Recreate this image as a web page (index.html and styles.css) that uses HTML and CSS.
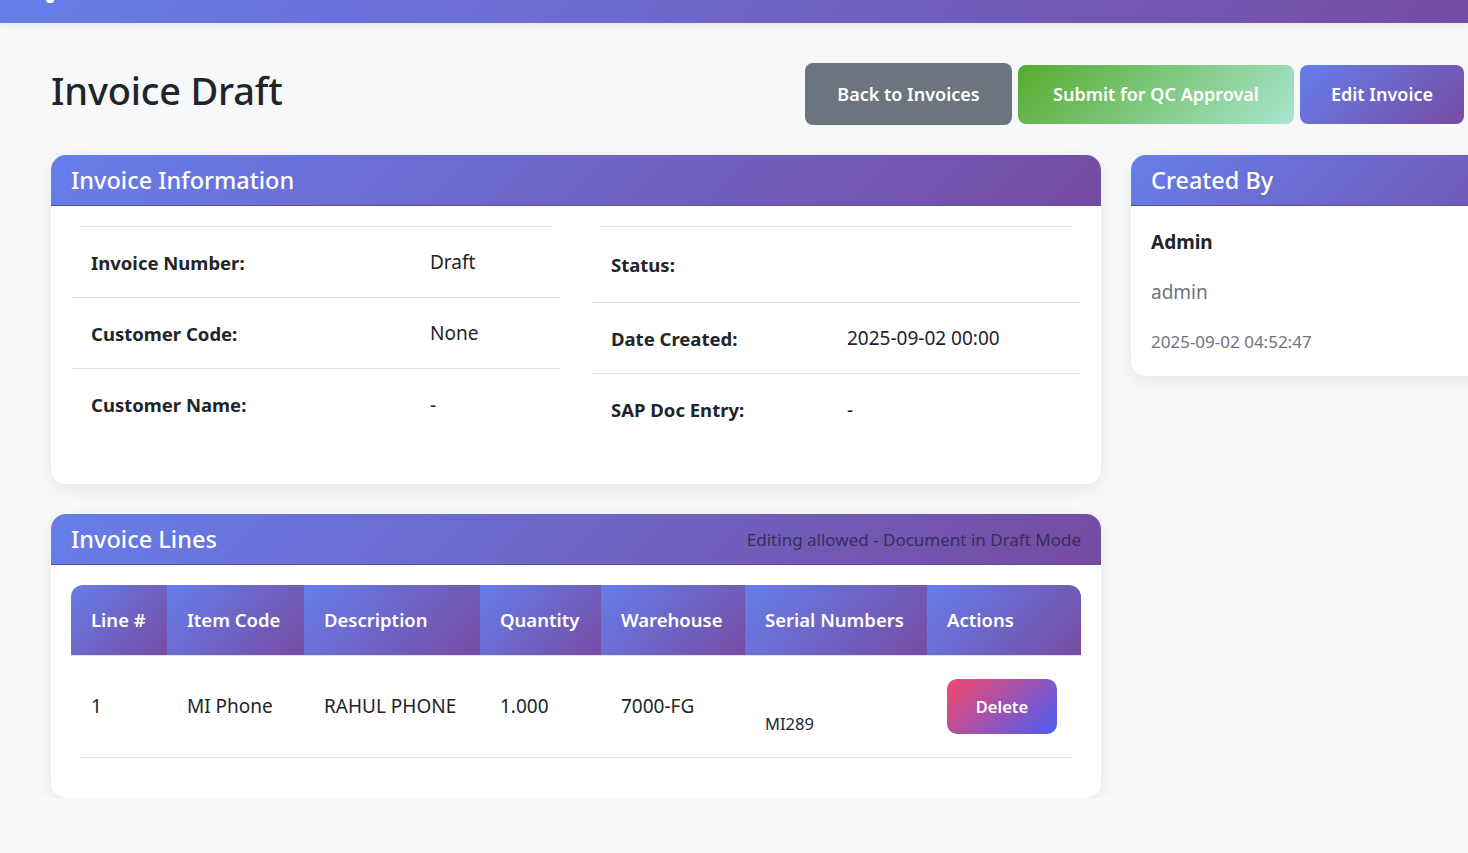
FILE: index.html
```html
<!DOCTYPE html>
<html lang="en">
<head>
<meta charset="utf-8">
<title>Invoice Draft</title>
<link rel="stylesheet" href="styles.css">
</head>
<body>
<div class="navbar"><span class="nav-dot"></span></div>
<main class="page">
  <div class="page-header">
    <h1 class="page-title">Invoice Draft</h1>
    <div class="actions">
      <button class="btn btn-back">Back to Invoices</button>
      <button class="btn btn-submit">Submit for QC Approval</button>
      <button class="btn btn-edit">Edit Invoice</button>
    </div>
  </div>
  <div class="layout">
    <div class="main-col">
      <section class="card">
        <div class="card-header"><h2 class="card-title">Invoice Information</h2></div>
        <div class="card-body info-body">
          <div class="info-list info-left">
            <div class="rule rule-inset"></div>
            <div class="info-row"><div class="info-label">Invoice Number:</div><div class="info-value">Draft</div></div>
            <div class="info-row"><div class="info-label">Customer Code:</div><div class="info-value">None</div></div>
            <div class="info-row last"><div class="info-label">Customer Name:</div><div class="info-value">-</div></div>
          </div>
          <div class="info-list info-right">
            <div class="rule rule-inset"></div>
            <div class="info-row tall"><div class="info-label">Status:</div><div class="info-value"></div></div>
            <div class="info-row"><div class="info-label">Date Created:</div><div class="info-value">2025-09-02 00:00</div></div>
            <div class="info-row last"><div class="info-label">SAP Doc Entry:</div><div class="info-value">-</div></div>
          </div>
        </div>
      </section>
      <section class="card">
        <div class="card-header header-split">
          <h2 class="card-title">Invoice Lines</h2>
          <span class="header-note">Editing allowed - Document in Draft Mode</span>
        </div>
        <div class="card-body lines-body">
          <table class="lines-table">
            <colgroup>
              <col class="c1"><col class="c2"><col class="c3"><col class="c4"><col class="c5"><col class="c6"><col class="c7">
            </colgroup>
            <thead>
              <tr>
                <th class="th-first">Line #</th>
                <th>Item Code</th>
                <th>Description</th>
                <th>Quantity</th>
                <th>Warehouse</th>
                <th>Serial Numbers</th>
                <th class="th-last">Actions</th>
              </tr>
            </thead>
            <tbody>
              <tr>
                <td>1</td>
                <td>MI Phone</td>
                <td>RAHUL PHONE</td>
                <td>1.000</td>
                <td>7000-FG</td>
                <td class="serials"><div class="serial">MI289</div></td>
                <td><button class="btn-delete">Delete</button></td>
              </tr>
            </tbody>
          </table>
          <div class="rule rule-inset"></div>
        </div>
      </section>
    </div>
    <aside class="side-col">
      <section class="card">
        <div class="card-header"><h2 class="card-title">Created By</h2></div>
        <div class="card-body creator-body">
          <div class="creator-name">Admin</div>
          <div class="creator-user">admin</div>
          <div class="creator-date">2025-09-02 04:52:47</div>
        </div>
      </section>
    </aside>
  </div>
</main>
</body>
</html>
```

FILE: styles.css
```css
* { box-sizing: border-box; }
html, body { margin: 0; padding: 0; }
body {
  background: #f7f8fa;
  font-family: "Noto Sans", "Open Sans", sans-serif;
  color: #212529;
  overflow-x: hidden;
  width: 1468px;
}
.navbar {
  height: 23px;
  background: linear-gradient(135deg, #667eea 0%, #764ba2 100%);
  box-shadow: 0 2px 8px rgba(0,0,0,0.08);
  padding-left: 46px;
}
.nav-dot {
  display: block;
  width: 8px;
  height: 3px;
  background: #fff;
  border-radius: 0 0 4px 4px;
}
.page {
  padding: 40px 0 0 51px;
}
.page-header {
  display: flex;
  align-items: center;
  justify-content: space-between;
  height: 62px;
  width: 1413px;
  margin-bottom: 30px;
}
.page-title {
  margin: 0 0 8px;
  font-size: 38px;
  font-weight: 500;
  color: #212529;
  letter-spacing: -0.2px;
}
.actions {
  display: flex;
  align-items: center;
  gap: 6px;
}
.btn {
  border: none;
  color: #fff;
  font-family: inherit;
  font-size: 18px;
  font-weight: 600;
  border-radius: 8px;
  height: 59px;
  padding: 0;
}
.btn-back { background: #6c757d; width: 207px; height: 62px; }
.btn-submit { background: linear-gradient(135deg, #56ab2f 0%, #a8e6cf 100%); width: 276px; }
.btn-edit { background: linear-gradient(135deg, #667eea 0%, #764ba2 100%); width: 164px; }

.layout {
  display: grid;
  grid-template-columns: 1050px 510px;
  column-gap: 30px;
  align-items: start;
}
.main-col { display: flex; flex-direction: column; gap: 30px; }
.card {
  background: #fff;
  border-radius: 15px;
  box-shadow: 0 5px 20px rgba(0,0,0,0.07);
  overflow: hidden;
}
.card-header {
  height: 51px;
  padding: 0 20px;
  background: linear-gradient(135deg, #667eea 0%, #764ba2 100%);
  border-bottom: 1px solid #5a4fb0;
  display: flex;
  align-items: center;
}
.card-title {
  margin: 0;
  font-size: 23.5px;
  font-weight: 500;
  color: #fff;
}
.header-split { justify-content: space-between; }
.header-note {
  font-size: 17px;
  color: #362f5c;
}
.rule { height: 1px; background: #dee2e6; }
.rule-inset { margin: 0 9px; }

.info-body {
  padding: 20px 20px 39px;
  display: grid;
  grid-template-columns: 490px 490px;
  column-gap: 30px;
  align-items: start;
}
.info-row {
  display: flex;
  align-items: center;
  height: 71px;
  border-bottom: 1px solid #dee2e6;
  font-size: 19px;
}
.info-row.tall { height: 76px; }
.info-row.last { border-bottom: none; }
.info-label {
  font-weight: 700;
  font-size: 18.5px;
  padding-left: 20px;
}
.info-left .info-label { width: 359px; }
.info-right .info-label { width: 256px; }

.lines-body { padding: 20px 20px 40px; }
.lines-table {
  width: 1010px;
  border-collapse: collapse;
  table-layout: fixed;
}
.c1 { width: 96px; } .c2 { width: 137px; } .c3 { width: 176px; } .c4 { width: 121px; }
.c5 { width: 144px; } .c6 { width: 182px; } .c7 { width: 154px; }
.lines-table th {
  height: 70px;
  padding: 0 20px;
  text-align: left;
  color: #fff;
  font-size: 18.5px;
  font-weight: 600;
  background: linear-gradient(135deg, #667eea 0%, #764ba2 100%);
  border-bottom: 1px solid #e4e2f0;
}
.lines-table th.th-first { border-top-left-radius: 12px; }
.lines-table th.th-last { border-top-right-radius: 12px; }
.lines-table td {
  height: 102px;
  padding: 0 20px;
  font-size: 19px;
  color: #212529;
  vertical-align: middle;
}
.lines-table td.serials { font-size: 16.5px; }
.serial { padding-top: 34px; }
.btn-delete {
  width: 110px;
  height: 55px;
  border: none;
  border-radius: 10px;
  background: linear-gradient(135deg, #f5476b 0%, #4a5ef5 100%);
  color: #fff;
  font-family: inherit;
  font-size: 16.5px;
  font-weight: 600;
}

.creator-body { padding: 11px 20px 9px; }
.creator-body > div { height: 50px; line-height: 50px; }
.creator-name { font-weight: 700; font-size: 19px; color: #212529; }
.creator-user { font-size: 19px; color: #6c757d; }
.creator-date { font-size: 17px; color: #6c757d; }
```
